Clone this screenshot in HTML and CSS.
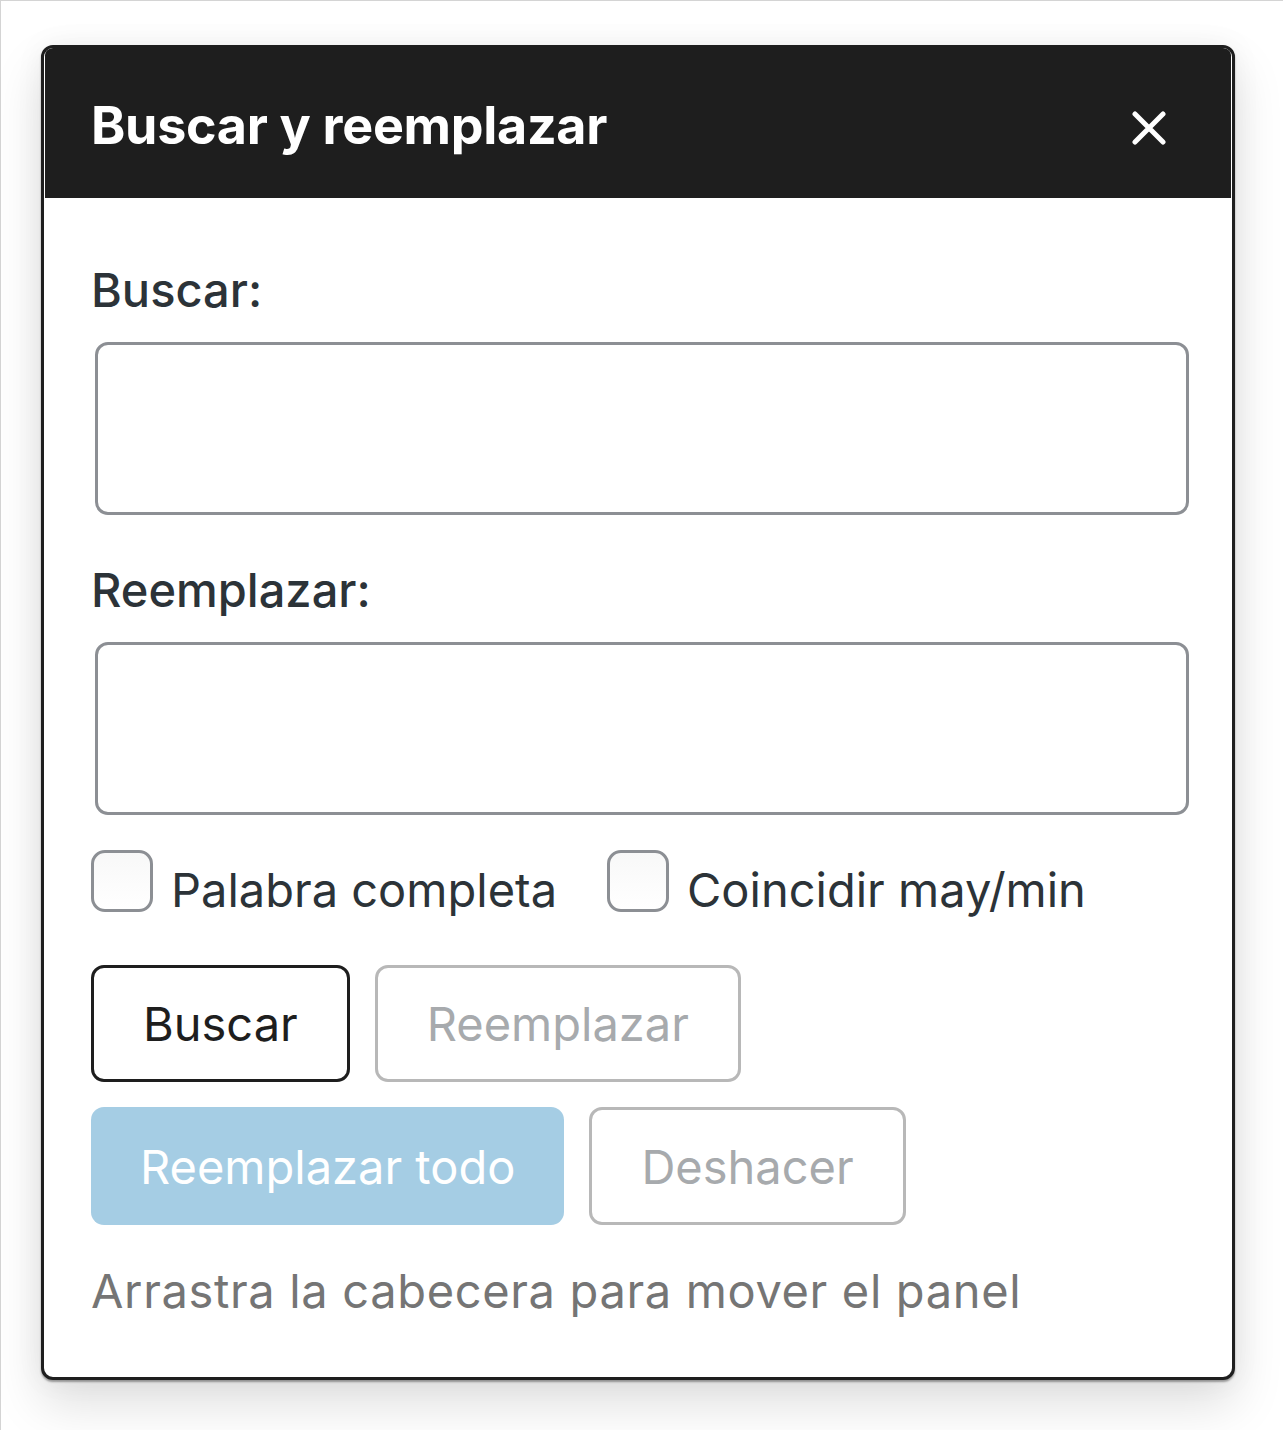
FILE: index.html
```html
<!DOCTYPE html>
<html lang="es">
<head>
<meta charset="utf-8">
<title>Buscar y reemplazar</title>
<link rel="stylesheet" href="styles.css">
</head>
<body>
<div class="page">
  <div class="panel">
    <div class="panel-header">
      <h1 class="panel-title">Buscar y reemplazar</h1>
      <button class="close-btn" aria-label="Cerrar">
        <svg viewBox="0 0 34 34" width="34" height="34"><path d="M3 3 L31 31 M31 3 L3 31" stroke="#fff" stroke-width="5" stroke-linecap="round" fill="none"/></svg>
      </button>
    </div>
    <div class="panel-body">
      <label class="field-label" for="q">Buscar:</label>
      <input class="field-input" id="q" type="text">
      <label class="field-label second" for="r">Reemplazar:</label>
      <input class="field-input" id="r" type="text">
      <div class="options">
        <label class="option"><span class="check"></span><span class="option-text">Palabra completa</span></label>
        <label class="option"><span class="check"></span><span class="option-text">Coincidir may/min</span></label>
      </div>
      <div class="actions">
        <button class="btn btn-outline">Buscar</button>
        <button class="btn btn-disabled">Reemplazar</button>
        <button class="btn btn-primary-disabled">Reemplazar todo</button>
        <button class="btn btn-disabled btn-undo">Deshacer</button>
      </div>
      <p class="hint">Arrastra la cabecera para mover el panel</p>
    </div>
  </div>
</div>
</body>
</html>
```
FILE: styles.css
```css
html, body {
  margin: 0;
  padding: 0;
  background: #ffffff;
}
body {
  font-family: Inter, "Noto Sans", "Liberation Sans", sans-serif;
}
.page {
  width: 1283px;
  height: 1430px;
  box-sizing: border-box;
  border-top: 1px solid #d4d4d4;
  border-left: 1px solid #d4d4d4;
  padding: 44px 0 0 40px;
  background: #ffffff;
}
.panel {
  width: 1194px;
  box-sizing: border-box;
  border: 3px solid #1e1e1e;
  border-radius: 12px;
  background: #ffffff;
  box-shadow: 0 2px 2px rgba(0,0,0,0.35), 0 24px 50px rgba(0,0,0,0.13), 0 0 30px rgba(0,0,0,0.05);
  overflow: hidden;
}
.panel-header {
  height: 150px;
  background: #1e1e1e;
  border-radius: 7px 7px 0 0;
  margin: 0 1px;
  display: flex;
  align-items: center;
  justify-content: space-between;
  padding: 0 52px 0 46px;
}
.panel-title {
  margin: 0;
  color: #ffffff;
  font-size: 52px;
  font-weight: 700;
  letter-spacing: -0.3px;
  line-height: 1;
  padding-top: 6px;
}
.close-btn {
  width: 60px;
  height: 60px;
  border: 0;
  padding: 0;
  background: transparent;
  display: flex;
  align-items: center;
  justify-content: center;
  margin-top: 10px;
}
.panel-body {
  padding: 64px 44px 58px 47px;
  display: flex;
  flex-direction: column;
  align-items: flex-start;
}
.field-label {
  font-size: 47px;
  line-height: 56px;
  color: #2c3338;
  font-weight: 500;
}
.field-label.second {
  margin-top: 47px;
}
.field-input {
  box-sizing: border-box;
  display: block;
  width: 1094px;
  height: 173px;
  margin: 24px 0 0 4px;
  border: 3px solid #8c8f94;
  border-radius: 13px;
  background: #ffffff;
  font-size: 47px;
  font-family: inherit;
  padding: 0 20px;
  outline: none;
}
.options {
  display: flex;
  gap: 50px;
  margin-top: 35px;
}
.option {
  display: flex;
  align-items: flex-start;
  gap: 18px;
}
.check {
  box-sizing: border-box;
  width: 62px;
  height: 62px;
  border: 3px solid #8c8f94;
  border-radius: 14px;
  background: linear-gradient(#f8f8f8, #ffffff);
  flex: none;
}
.option-text {
  font-size: 47px;
  line-height: 56px;
  color: #2c3338;
  margin-top: 12px;
}
.actions {
  display: flex;
  flex-wrap: wrap;
  gap: 25px;
  margin-top: 47px;
  width: 1100px;
}
.btn {
  box-sizing: border-box;
  height: 117px;
  font-family: inherit;
  font-size: 47px;
  padding: 0 49px;
  border-radius: 13px;
  background: #ffffff;
  line-height: 1;
}
.btn-outline {
  border: 3px solid #1e1e1e;
  color: #1e1e1e;
}
.btn-disabled {
  border: 3px solid #b8b8b8;
  color: #a7aaad;
}
.btn-primary-disabled {
  border: 0;
  background: #a5cde4;
  color: #ffffff;
  height: 118px;
}
.btn-undo {
  height: 118px;
}
.hint {
  margin: 38px 0 0 0;
  font-size: 47px;
  line-height: 56px;
  letter-spacing: 0.65px;
  color: #757575;
}
```
